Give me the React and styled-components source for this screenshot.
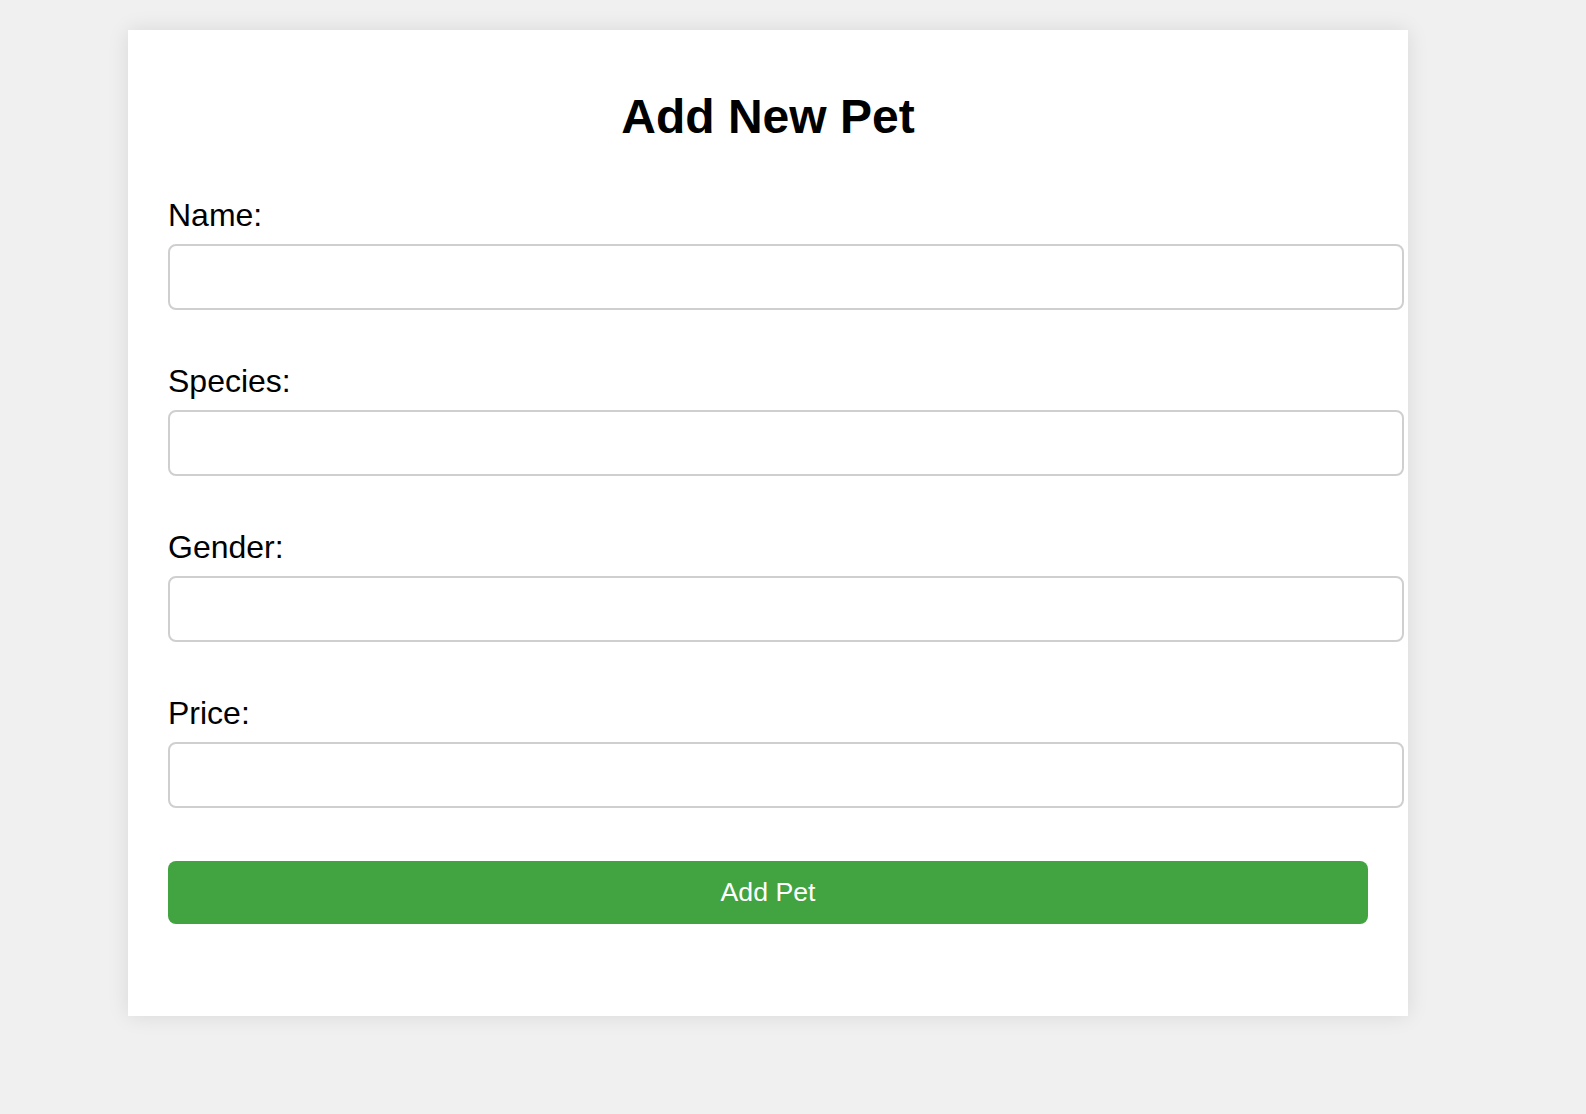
import styled, { createGlobalStyle } from "styled-components";

const GlobalStyle = createGlobalStyle`
  html, body {
    margin: 0;
    padding: 0;
    background: #f0f0f0;
    font-family: "Liberation Sans", Arial, sans-serif;
  }
`

const fields = ["Name", "Species", "Gender", "Price"];

export default function App() {
  return (
    <>
      <GlobalStyle />
      <Page>
        <Card>
          <Title>Add New Pet</Title>
          <form onSubmit={(e) => e.preventDefault()}>
            {fields.map((f) => (
              <Field key={f}>
                <Label htmlFor={f.toLowerCase()}>{f}:</Label>
                <Input id={f.toLowerCase()} type="text" />
              </Field>
            ))}
            <SubmitButton type="submit">Add Pet</SubmitButton>
          </form>
        </Card>
      </Page>
    </>
  )
}

const Page = styled.div`
  padding: 30px 0 40px 128px;
  min-height: 1114px;
  box-sizing: border-box;
`

const Card = styled.div`
  width: 1280px;
  box-sizing: border-box;
  background-color: #ffffff;
  padding: 40px 40px 40px;
  box-shadow: 0 0 20px rgba(0, 0, 0, 0.1);
`

const Title = styled.h2`
  margin: 19px 0 54px;
  font-size: 48px;
  line-height: 55px;
  font-weight: 700;
  text-align: center;
  color: #000;
`

const Field = styled.div`
  margin-bottom: 54px;
`

const Label = styled.label`
  display: block;
  font-size: 32px;
  line-height: 35px;
  color: #000;
  margin-bottom: 11px;
`

const Input = styled.input`
  display: block;
  width: 100%;
  height: 30px;
  box-sizing: content-box;
  padding: 16px;
  border: 2px solid #cfcfcf;
  border-radius: 8px;
  font-family: "Liberation Sans", Arial, sans-serif;
  font-size: 26px;
  background: #fff;
  outline: none;
`

const SubmitButton = styled.button`
  display: flex;
  align-items: center;
  justify-content: center;
  width: 100%;
  height: 63px;
  margin: -1px 0 52px;
  border: none;
  border-radius: 8px;
  background-color: #42a341;
  color: #ffffff;
  font-family: "Liberation Sans", Arial, sans-serif;
  font-size: 26.67px;
  cursor: pointer;
`
